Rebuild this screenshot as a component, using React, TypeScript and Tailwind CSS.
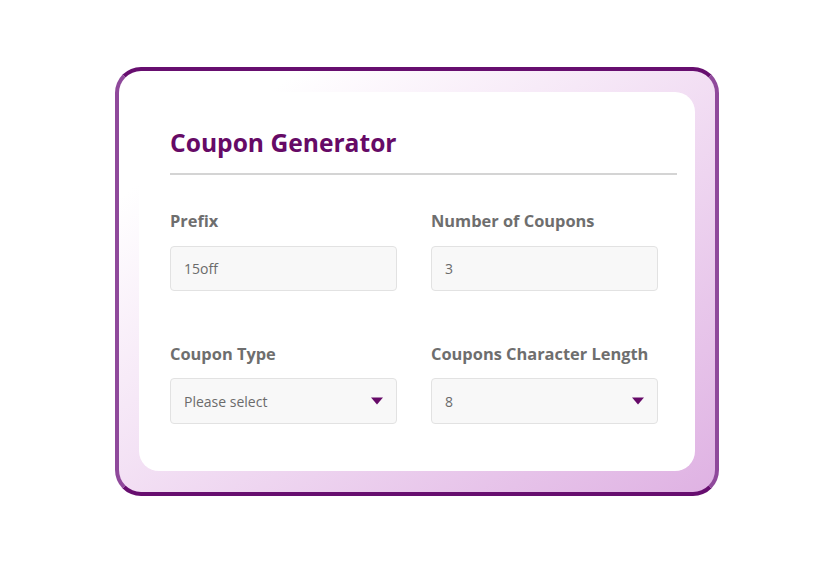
const fields = [
  { label: 'Prefix', value: '15off', select: false },
  { label: 'Number of Coupons', value: '3', select: false },
  { label: 'Coupon Type', value: 'Please select', select: true },
  { label: 'Coupons Character Length', value: '8', select: true },
]

const Caret = () => (
  <svg width="12" height="8" viewBox="0 0 12 8" className="shrink-0">
    <path d="M0 0.5 H12 L6 7.5 Z" fill="#660a68" />
  </svg>
)

export default function App() {
  return (
    <div className="w-[834px] h-[563px] bg-white flex items-center justify-center font-['Open_Sans',sans-serif]">
      <div className="w-[604px] h-[429px] rounded-[26px] border-4 border-x-[#8f499b] border-y-[#670e6f] bg-linear-to-br from-white from-15% to-[#dfb2e3] pt-[21px] pb-[21px] px-[20px]">
        <div className="h-full bg-white rounded-[20px] pt-[35px] pl-[31px] pr-[18px]">
          <h1 className="text-[24.6px] leading-8 font-bold text-[#660a66]">Coupon Generator</h1>
          <div className="mt-[14px] h-[2px] bg-[#d4d4d4]" />
          <div className="mt-[34px] grid grid-cols-[227px_227px] gap-x-[34px] gap-y-[51px]">
            {fields.map(f => (
              <div key={f.label}>
                <div className="text-[16.4px] leading-6 font-bold text-[#6e6e6e]">{f.label}</div>
                <div className={`${f.select ? 'mt-[12px] h-[46px]' : 'mt-[13px] h-[45px]'} rounded-[4px] border border-[#e2e2e2] bg-[#f8f8f8] pl-[13px] pr-[13px] flex items-center justify-between`}>
                  <span className="text-[14px] text-[#6b6b6b]">{f.value}</span>
                  {f.select && <Caret />}
                </div>
              </div>
            ))}
          </div>
        </div>
      </div>
    </div>
  )
}
